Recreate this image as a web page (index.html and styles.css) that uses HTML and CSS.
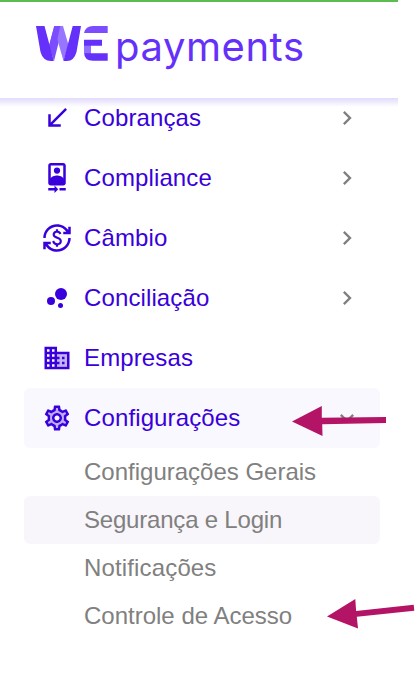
FILE: index.html
```html
<!DOCTYPE html>
<html lang="pt-BR">
<head>
<meta charset="utf-8">
<title>WE payments</title>
<link rel="stylesheet" href="styles.css">
</head>
<body>
<header class="header">
  <svg class="logo" viewBox="36 20 270 54" aria-label="WE payments">
    <path fill="#7c4dff" d="M54.300 26h8.500L54 61l-5-15z"/>
    <path fill="#9875ff" d="M55.500 33 57 26h6l5.500 19-5 16z"/>
    <path fill="#7c4dff" d="M54.300 26h6L54 54l-5-8z"/>
    <path fill="#6430fa" d="M36 26h8.500l9.300 35H51q-8 0-10.500-9zM81 26h-8.300L63.500 61H67q7 0 9.500-9z"/>
    <path fill="#7c4dff" d="M84 33q1.500-7 9-7h14.700v7z"/>
    <path fill="#6430fa" d="M84 39.700h18v6H91v7.500h16.700v7.500H93q-9 0-9-9z"/>
    <path fill="#9270ff" d="M84 45.700h7v7.500h-7z"/>
    <text class="wordmark" x="115" y="61" textLength="189">payments</text>
  </svg>
</header>
<nav class="menu">
  <a class="item">
    <svg class="icon" viewBox="0 0 24 24"><path d="M20 5.410 18.590 4 7 15.590V9H5v10h10v-2H8.410z"/></svg>
    <span class="label">Cobranças</span>
    <svg class="chevron" viewBox="0 0 24 24"><path d="M10 6 8.590 7.410 13.170 12l-4.580 4.590L10 18l6-6z"/></svg>
  </a>
  <a class="item">
    <svg class="icon" viewBox="0 0 24 24"><path d="M10 20H5v2h5v2l3-3-3-3v2zm4 0v2h5v-2h-5zM12 8.500a2.500 2.500 0 1 0 0-5 2.500 2.500 0 0 0 0 5zm5-8.500H7C5.900 0 5 .9 5 2v14c0 1.100.9 2 2 2h10c1.100 0 2-.9 2-2V2c0-1.100-.9-2-2-2zM7 2h10v10.500c0-1.670-3.330-2.500-5-2.500s-5 .83-5 2.500V2z"/></svg>
    <span class="label">Compliance</span>
    <svg class="chevron" viewBox="0 0 24 24"><path d="M10 6 8.590 7.410 13.170 12l-4.580 4.590L10 18l6-6z"/></svg>
  </a>
  <a class="item">
    <svg class="icon" viewBox="0 0 24 24"><path d="M12.890 11.100c-1.780-.59-2.640-.96-2.640-1.900 0-1.020 1.110-1.390 1.810-1.390 1.310 0 1.790.99 1.900 1.340l1.580-.67c-.15-.44-.82-1.910-2.660-2.230V5h-1.750v1.260c-2.600.56-2.620 2.850-2.620 2.960 0 2.270 2.250 2.910 3.350 3.310 1.580.56 2.280 1.070 2.280 2.030 0 1.130-1.050 1.610-1.980 1.610-1.820 0-2.340-1.870-2.400-2.090l-1.660.67c.63 2.190 2.280 2.780 3.020 2.960V19h1.750v-1.240c.52-.09 3.020-.59 3.020-3.220.01-1.390-.6-2.610-3-3.440zM3 21H1v-6h6v2H4.520c1.610 2.410 4.360 4 7.480 4 4.970 0 9-4.030 9-9h2c0 6.080-4.920 11-11 11-3.720 0-7.010-1.850-9-4.670V21zm-2-9C1 5.920 5.920 1 12 1c3.720 0 7.010 1.850 9 4.670V3h2v6h-6V7h2.480C17.870 4.590 15.120 3 12 3c-4.970 0-9 4.030-9 9H1z"/></svg>
    <span class="label">Câmbio</span>
    <svg class="chevron" viewBox="0 0 24 24"><path d="M10 6 8.590 7.410 13.170 12l-4.580 4.590L10 18l6-6z"/></svg>
  </a>
  <a class="item">
    <svg class="icon" viewBox="0 0 24 24"><circle cx="7.200" cy="14.400" r="3.200"/><circle cx="14.800" cy="18" r="2"/><circle cx="15.200" cy="8.800" r="4.800"/></svg>
    <span class="label">Conciliação</span>
    <svg class="chevron" viewBox="0 0 24 24"><path d="M10 6 8.590 7.410 13.170 12l-4.580 4.590L10 18l6-6z"/></svg>
  </a>
  <a class="item">
    <svg class="icon" viewBox="0 0 24 24"><path opacity=".3" d="M12 9h8v10h-8z"/><path d="M12 7V3H2v18h20V7H12zM6 19H4v-2h2v2zm0-4H4v-2h2v2zm0-4H4V9h2v2zm0-4H4V5h2v2zm4 12H8v-2h2v2zm0-4H8v-2h2v2zm0-4H8V9h2v2zm0-4H8V5h2v2zm10 12h-8v-2h2v-2h-2v-2h2v-2h-2V9h8v10zm-4-8h2v2h-2zm0 4h2v2h-2z"/></svg>
    <span class="label">Empresas</span>
  </a>
  <a class="item active">
    <svg class="icon" viewBox="0 0 24 24"><path fill-rule="evenodd" opacity=".3" d="M19.280 8.600l-.7-1.210-1.270.51-1.060.43-.91-.7c-.39-.3-.8-.54-1.230-.71l-1.060-.43-.16-1.130L12.700 4h-1.400l-.19 1.350-.16 1.130-1.060.44c-.41.17-.82.41-1.250.73l-.9.68-1.050-.42-1.270-.52-.7 1.210 1.080.84.89.7-.14 1.130c-.03.3-.05.53-.05.73s.02.430.05.73l.14 1.130-.89.7-1.080.84.7 1.210 1.270-.51 1.060-.43.91.7c.39.3.8.54 1.230.71l1.060.43.16 1.130.19 1.360h1.390l.19-1.350.16-1.130 1.060-.43c.41-.17.82-.41 1.250-.73l.9-.68 1.040.42 1.270.51.7-1.210-1.080-.84-.89-.7.14-1.130c.04-.31.05-.52.05-.73 0-.21-.02-.43-.05-.73l-.14-1.130.89-.7zM12 16a4 4 0 1 1 0-8 4 4 0 0 1 0 8z"/><path d="M19.430 12.980c.04-.32.07-.64.07-.98s-.03-.66-.07-.98l2.110-1.650c.19-.15.24-.42.12-.64l-2-3.460c-.12-.22-.39-.3-.61-.22l-2.490 1c-.52-.4-1.080-.73-1.690-.98l-.38-2.650C14.460 2.180 14.250 2 14 2h-4c-.25 0-.46.18-.49.42l-.38 2.650c-.61.25-1.170.59-1.690.98l-2.490-1c-.23-.09-.49 0-.61.22l-2 3.460c-.13.22-.07.490.12.640l2.110 1.650c-.04.32-.07.65-.07.98s.03.660.07.98l-2.110 1.650c-.19.15-.24.420-.12.640l2 3.460c.12.22.390.3.610.22l2.490-1c.52.4 1.080.73 1.690.98l.38 2.650c.03.24.24.420.490.420h4c.25 0 .46-.18.490-.42l.38-2.650c.61-.25 1.170-.59 1.690-.98l2.490 1c.23.09.490 0 .61-.22l2-3.460c.12-.22.07-.49-.12-.64zm-1.980-1.710c.04.31.05.520.05.730s-.02.430-.05.73l-.14 1.130.89.7 1.080.84-.7 1.210-1.270-.51-1.040-.42-.9.68c-.43.32-.84.56-1.250.73l-1.060.43-.16 1.130-.2 1.350h-1.400l-.19-1.350-.16-1.130-1.060-.43c-.43-.18-.83-.41-1.230-.71l-.91-.7-1.060.43-1.270.51-.7-1.210 1.080-.84.89-.7-.14-1.130c-.03-.31-.05-.54-.05-.74s.02-.43.05-.73l.14-1.130-.89-.7-1.080-.84.7-1.210 1.270.51 1.040.42.9-.68c.43-.32.84-.56 1.250-.73l1.060-.43.16-1.130.2-1.350h1.390l.19 1.350.16 1.130 1.060.43c.43.18.83.41 1.230.71l.91.7 1.060-.43 1.270-.51.7 1.210-1.070.85-.89.7zM12 8c-2.210 0-4 1.790-4 4s1.790 4 4 4 4-1.790 4-4-1.790-4-4-4zm0 6c-1.100 0-2-.9-2-2s.9-2 2-2 2 .9 2 2-.9 2-2 2z"/></svg>
    <span class="label">Configurações</span>
    <svg class="chevron" viewBox="0 0 24 24"><path d="M16.590 8.590 12 13.170 7.410 8.590 6 10l6 6 6-6z"/></svg>
    <svg class="pointer pointer-settings" viewBox="292 406 94 30"><path d="M292 421.500 321.800 406v11.800L386 417v6l-63.800 1.200.3 11.800z"/></svg>
  </a>
  <div class="submenu">
    <a class="subitem">Configurações Gerais</a>
    <a class="subitem selected">Segurança e Login</a>
    <a class="subitem wide">Notificações</a>
    <a class="subitem">Controle de Acesso
      <svg class="pointer pointer-access" viewBox="327 599 88 30"><path d="M327 616.500 355.300 599l.8 12 57.600-6.200.6 6-57.500 6 1.200 11.700z"/></svg>
    </a>
  </div>
</nav>
</body>
</html>
```
FILE: styles.css
```css
* { box-sizing: border-box; }

body {
  margin: 0;
  width: 415px;
  height: 688px;
  overflow: hidden;
  background: #fff;
  font-family: "Liberation Sans", Arial, sans-serif;
  font-size: 24px;
}

.header {
  position: relative;
  z-index: 1;
  width: 397.5px;
  height: 98px;
  padding: 18px 0 0 36px;
  border-top: 2px solid #5bbd50;
  background: #fff;
}

/* Soft edge under the header bar */
.header::after {
  content: "";
  position: absolute;
  top: 100%;
  left: 0;
  width: 100%;
  height: 9px;
  background: linear-gradient(rgba(98, 60, 240, .19), rgba(98, 60, 240, 0));
}

.logo {
  display: block;
  width: 270px;
  height: 54px;
}

.wordmark {
  font-family: Inter, sans-serif;
  font-size: 40px;
  fill: #6430fa;
}

.menu {
  width: 356px;
  margin: -10px 0 0 24px;
}

.item {
  position: relative;
  display: flex;
  align-items: center;
  height: 60px;
  padding: 0 19px 0 18px;
  border-radius: 6px;
  color: #3900dc;
}

.active { background: #f9f8ff; }

.icon,
.chevron {
  flex: none;
  width: 28px;
  height: 28px;
  fill: currentColor;
}

.icon {
  width: 30px;
  height: 30px;
}

.label {
  flex: 1;
  margin-left: 12px;
  letter-spacing: .12px;
}

.chevron { fill: #808080; }

.submenu {
  display: flex;
  flex-direction: column;
}

.subitem {
  position: relative;
  height: 48px;
  padding-left: 60px;
  border-radius: 6px;
  line-height: 48px;
  color: #808080;
}

.selected {
  background: #f8f6fa;
  letter-spacing: -.2px;
}

.wide { letter-spacing: .15px; }

.pointer {
  position: absolute;
  fill: #b31465;
}

.pointer-settings {
  top: 18px;
  left: 268px;
  width: 94px;
  height: 30px;
}

.pointer-access {
  top: 7px;
  left: 303px;
  width: 88px;
  height: 30px;
}
```
